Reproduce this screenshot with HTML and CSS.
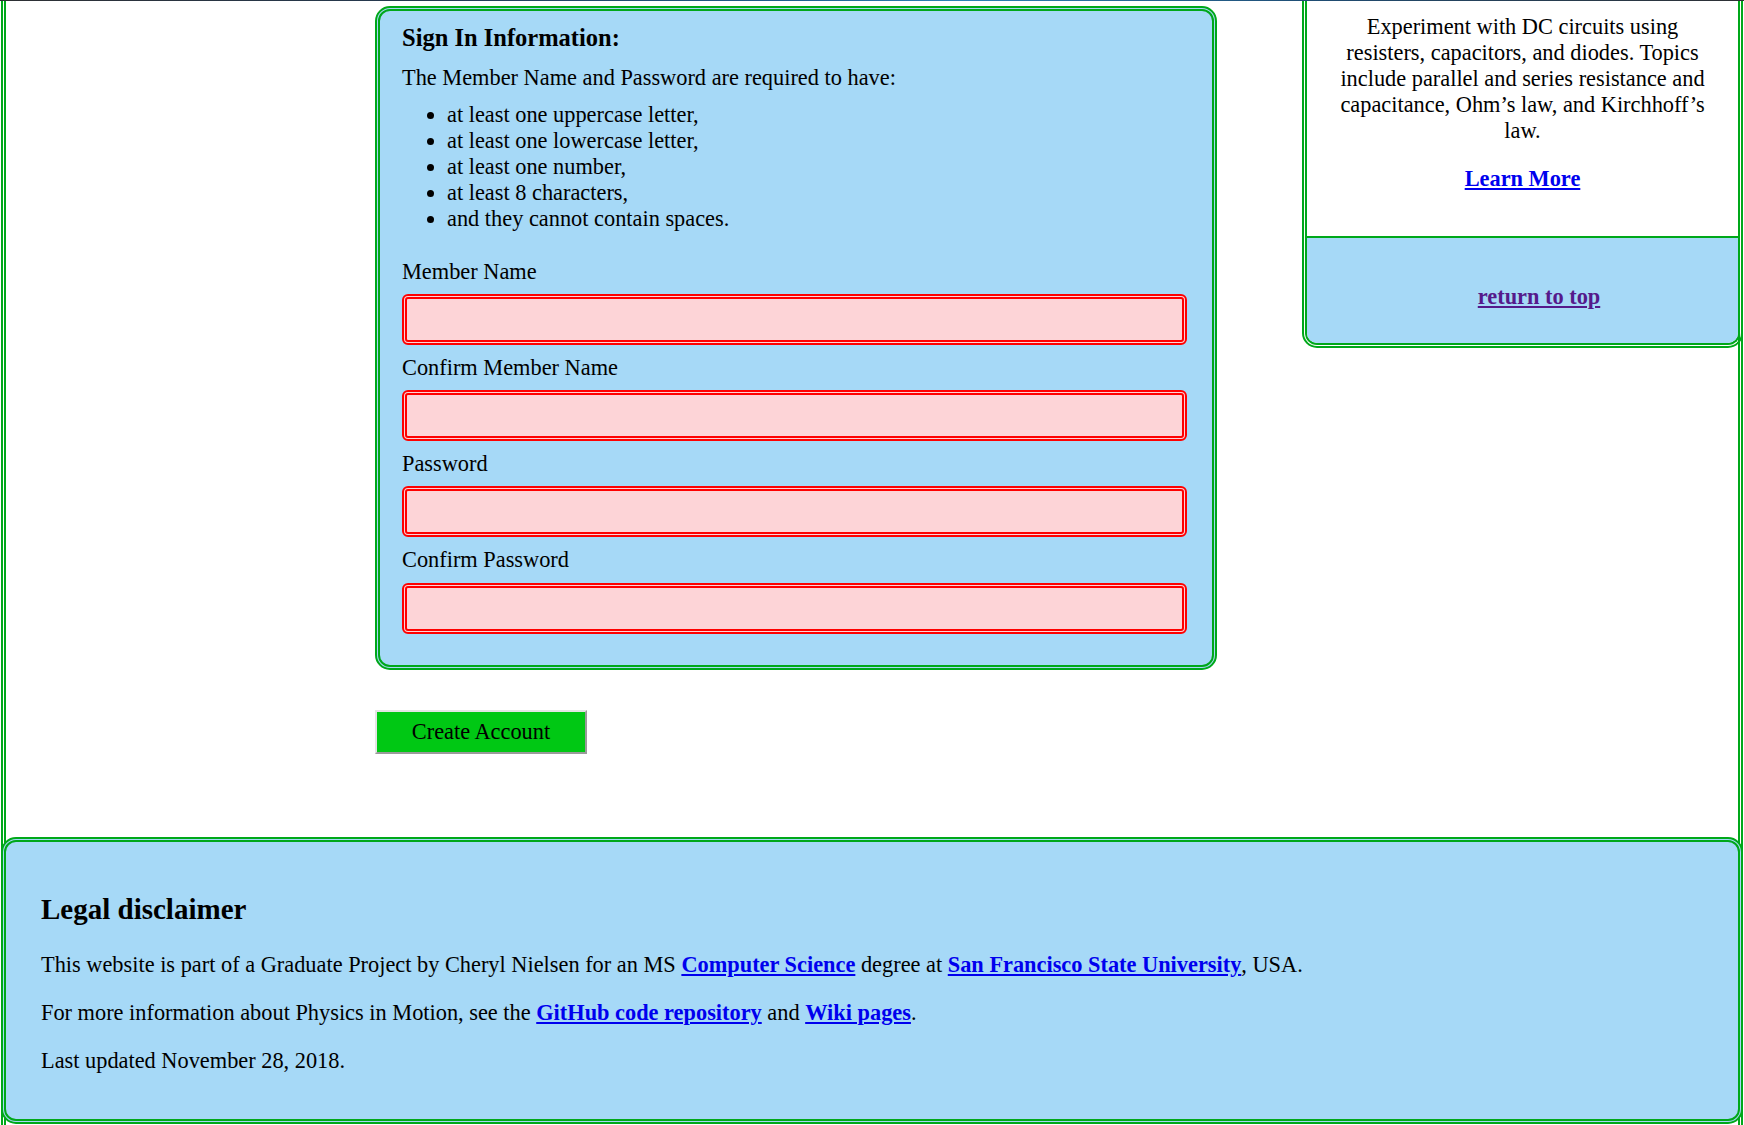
FILE: index.html
```html
<!DOCTYPE html>
<html lang="en">
<head>
<meta charset="utf-8">
<title>Create Account - Physics in Motion</title>
<link rel="stylesheet" href="styles.css">
</head>
<body>
<div class="topline"></div>
<div class="page">
  <div class="main">
    <div class="form-col">
      <form class="signin-box">
        <h3 class="box-title">Sign In Information:</h3>
        <p class="rules-intro">The Member Name and Password are required to have:</p>
        <ul class="rules">
          <li>at least one uppercase letter,</li>
          <li>at least one lowercase letter,</li>
          <li>at least one number,</li>
          <li>at least 8 characters,</li>
          <li>and they cannot contain spaces.</li>
        </ul>
        <label class="field-label" for="member">Member Name</label>
        <input class="field" id="member" type="text">
        <label class="field-label" for="member2">Confirm Member Name</label>
        <input class="field" id="member2" type="text">
        <label class="field-label" for="pw">Password</label>
        <input class="field" id="pw" type="password">
        <label class="field-label" for="pw2">Confirm Password</label>
        <input class="field" id="pw2" type="password">
      </form>
      <button class="create-btn" type="button">Create Account</button>
    </div>
    <aside class="sidebar">
      <div class="side-top">
        <p class="side-text">Experiment with DC circuits using resisters, capacitors, and diodes. Topics include parallel and series resistance and capacitance, Ohm’s law, and Kirchhoff’s law.</p>
        <p class="side-link"><a class="link" href="#">Learn More</a></p>
      </div>
      <div class="side-bottom">
        <a class="link visited" href="#">return to top</a>
      </div>
    </aside>
  </div>
  <footer class="footer">
    <h2 class="footer-title">Legal disclaimer</h2>
    <p class="footer-text">This website is part of a Graduate Project by Cheryl Nielsen for an MS <a class="link" href="#">Computer Science</a> degree at <a class="link" href="#">San Francisco State University</a>, USA.</p>
    <p class="footer-text">For more information about Physics in Motion, see the <a class="link" href="#">GitHub code repository</a> and <a class="link" href="#">Wiki pages</a>.</p>
    <p class="footer-text">Last updated November 28, 2018.</p>
  </footer>
</div>
</body>
</html>
```
FILE: styles.css
```css
html, body {
  margin: 0;
  padding: 0;
  background: #ffffff;
}
body {
  font-family: "Liberation Serif", "Times New Roman", serif;
  font-size: 22.35px;
  line-height: 26px;
  color: #000;
  overflow: hidden;
  height: 1125px;
}
.topline {
  height: 1px;
  background: linear-gradient(to right, #2d2f33 0%, #243a52 25%, #1f5f8e 45%, #2d84b8 55%, #1f4d74 75%, #2d2f33 100%);
}
.page {
  margin: 0 1px;
  border-left: 5px double #00a81a;
  border-right: 5px double #00a81a;
  height: 1124px;
}
.main {
  display: flex;
  align-items: flex-start;
  padding-left: 369px;
  height: 836px;
}
.form-col {
  width: 842px;
  padding-top: 5px;
}
.signin-box {
  background: #a6d9f7;
  border: 5px double #00a81a;
  border-radius: 15px;
  padding: 11px 25px 22px 22px;
}
.box-title {
  margin: 0;
  font-size: 24.5px;
  line-height: 31px;
  font-weight: bold;
}
.rules-intro {
  margin: 12px 0 0;
}
.rules {
  margin: 11px 0 26.5px;
  padding-left: 45px;
}
.field-label {
  display: block;
}
.field {
  display: block;
  width: 100%;
  box-sizing: border-box;
  height: 51px;
  margin: 9.6px 0;
  border: 5px double #ff0000;
  border-radius: 6px;
  background: #fdd4d7;
  font: inherit;
  outline: none;
}
.create-btn {
  display: block;
  margin-top: 39.5px;
  width: 212px;
  height: 44px;
  background: #00c814;
  border: 2px solid;
  border-color: #e4e4e4 #9a9a9a #9a9a9a #e4e4e4;
  font-family: "Liberation Serif", "Times New Roman", serif;
  font-size: 22.35px;
  color: #000;
  padding: 0;
}
.sidebar {
  margin-left: auto;
  margin-right: -5px;
  width: 441px;
  box-sizing: border-box;
  border: 5px double #00a81a;
  border-top: none;
  border-radius: 0 0 15px 15px;
  text-align: center;
  overflow: hidden;
}
.side-top {
  background: #ffffff;
  padding: 12.7px 25px 44px;
  border-bottom: 2px solid #00a81a;
}
.side-text {
  margin: 0;
}
.side-link {
  margin: 22px 0 0;
  font-weight: bold;
}
.side-bottom {
  background: #a6d9f7;
  padding: 46px 0 33.5px 33px;
  font-weight: bold;
}
.link {
  color: #0000ee;
  font-weight: bold;
  text-decoration: underline;
}
.link.visited {
  color: #551a8b;
}
.footer {
  margin: 0 -5px;
  background: #a6d9f7;
  border: 5px double #00a81a;
  border-radius: 15px;
  padding: 51px 35px 45px;
}
.footer-title {
  margin: 0 0 26px;
  font-size: 29px;
  line-height: 33px;
  font-weight: bold;
}
.footer-text {
  margin: 0;
}
.footer-text + .footer-text {
  margin-top: 22px;
}
```
